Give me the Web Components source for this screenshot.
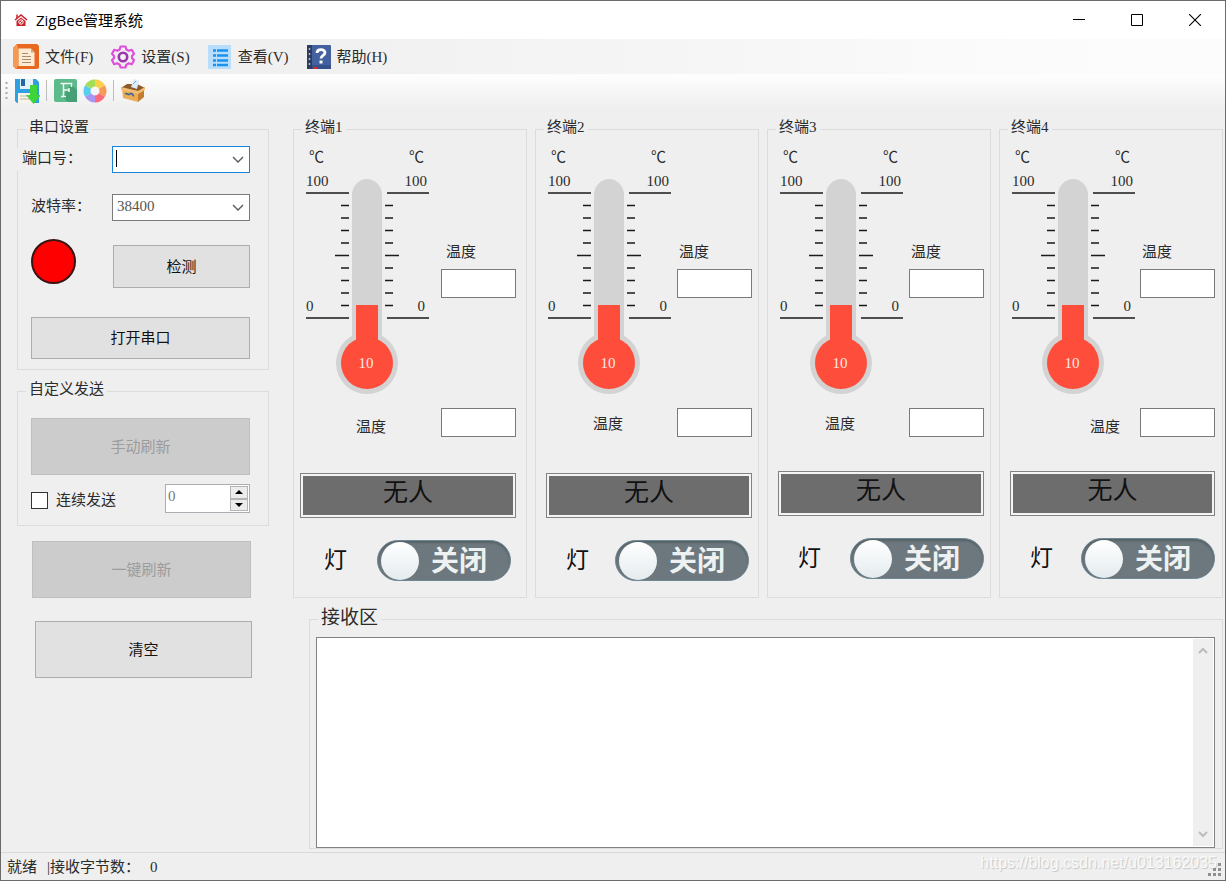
<!DOCTYPE html>
<html lang="zh-CN">
<head>
<meta charset="utf-8">
<title>ZigBee管理系统</title>
<style>
html, body { margin: 0; height: 100%; }
body {
  font-family: "Liberation Serif", "Noto Sans CJK SC", serif;
  font-size: 15px; line-height: 20px; color: #2b2b2b; background: #efefef;
}
</style>
</head>
<body>
<app-window></app-window>

<script>
function define(name, html, setup) {
  const tpl = document.createElement('template');
  tpl.innerHTML = html;
  customElements.define(name, class extends HTMLElement {
    constructor() {
      super();
      this.attachShadow({ mode: 'open' }).appendChild(tpl.content.cloneNode(true));
    }
    connectedCallback() { if (setup) setup(this, this.shadowRoot); }
  });
}

/* ---------- title bar ---------- */
define('title-bar', `
<style>
:host { display: flex; align-items: center; height: 38px; background: #fff; color: #000;
  font-family: "Open Sans", "Noto Sans CJK SC", sans-serif; padding: 0 1px 0 13px; }
h1 { font: inherit; margin: 0 auto 0 8px; }
button { width: 58px; height: 38px; border: 0; background: none; padding: 0; display: grid; place-items: center; }
svg { display: block; }
</style>
<svg width="14" height="14" viewBox="0 0 14 14" fill="none" stroke="#c8232c">
  <path d="M1 7 7 2l6 5" stroke-width="1.6"/><path d="M3 5V1.500" stroke-width="1.500"/>
  <path d="M2.500 8 7 4.500 11.500 8v5h-9z" fill="#c8232c" stroke="none"/>
  <circle cx="7" cy="9" r="2.200" stroke="#fff" stroke-width="1"/><path d="M6 10l3-3" stroke="#fff"/>
</svg>
<h1>ZigBee管理系统</h1>
<button aria-label="最小化"><svg width="12" height="12"><path d="M0 5.500h12" stroke="#000"/></svg></button>
<button aria-label="最大化"><svg width="12" height="12"><path d="M.5.5h11v11H.5z" fill="none" stroke="#000"/></svg></button>
<button aria-label="关闭窗口"><svg width="12" height="12"><path d="M0 0l12 12M12 0 0 12" stroke="#000" stroke-width="1.100"/></svg></button>
`);

/* ---------- menu ---------- */
define('menu-item', `
<style>
:host { display: block; }
button { display: flex; align-items: center; gap: 6px; border: 0; background: none; padding: 0; font: inherit; color: inherit; white-space: nowrap; }
</style>
<button><slot name="icon"></slot><slot></slot></button>
`);

define('menu-bar', `
<style>
:host { display: block; background: linear-gradient(90deg, #f0f0f0 25%, #fcfcfc 90%); }
nav { display: flex; align-items: center; gap: 18px; height: 35px; padding-left: 12px; }
svg { display: block; }
</style>
<nav>
  <menu-item><svg slot="icon" width="26" height="26" viewBox="0 0 26 26">
    <path d="M4 0h20l2 2v22l-2 1H3l-3-3V4z" fill="#e9681f"/><path d="M4 0 0 4v18l3 3 2-3V4z" fill="#f49a52"/>
    <path d="M5.500 4.500H18l3.500 4v13.500h-16z" fill="#fdebd2"/><path d="M18 4.500v4h3.500z" fill="#c9a98b"/>
    <path d="M9 9.500h6M9 12.500h9M9 15.500h9M9 18.500h9" stroke="#a98a74" stroke-width="1.200"/>
  </svg>文件(F)</menu-item>
  <menu-item><svg slot="icon" width="24" height="24" viewBox="0 0 24 24" fill="none" stroke="#c637c4">
    <path d="M9.500 1.500h5l.8 3 2.500 1.300 3-1 2.200 4-2 2.200v2l2 2.300-2.200 4-3-1-2.500 1.500-.8 2.700h-5l-.8-2.700-2.500-1.500-3 1-2.200-4 2-2.300v-2l-2-2.200 2.200-4 3 1 2.500-1.300z" stroke-width="2.200" stroke-linejoin="round" stroke="#e04fdb"/>
    <circle cx="12" cy="12" r="4.200" stroke="#9c36ad" stroke-width="2.600"/>
  </svg>设置(S)</menu-item>
  <menu-item><svg slot="icon" width="24" height="24" viewBox="0 0 24 24">
    <path d="M0 0h23v24H0z" fill="#b8defc"/>
    <path d="M5 5.500h3M5 10.500h3M5 15.500h3M5 20h3M9 5.500h11M9 10.500h11M9 15.500h11M9 20h11" stroke="#1a93ef" stroke-width="2.600"/>
  </svg>查看(V)</menu-item>
  <menu-item><svg slot="icon" width="24" height="24" viewBox="0 0 24 24">
    <rect width="24" height="24" rx="1" fill="#43609f"/><path d="M0 0h5v24H0z" fill="#2d3c5e"/>
    <path d="M5 20h19v4H5z" fill="#35508a"/>
    <path d="M2.500 3v2M2.500 8v2M2.500 13v2M2.500 18v2" stroke="#aeb9d2" stroke-width="1.500"/>
    <path d="M10 8c0-4.500 8-4.500 8-.4 0 3-4 2.700-4 6" fill="none" stroke="#fff" stroke-width="2.800"/>
    <path d="M12.500 15.500h3v3h-3z" fill="#fff"/><path d="M7 23h3" stroke="#d22b3a" stroke-width="2"/>
  </svg>帮助(H)</menu-item>
</nav>
`);

/* ---------- tool bar ---------- */
define('tool-bar', `
<style>
:host { display: flex; align-items: center; gap: 6px; height: 33px; padding: 0 0 2px 4px; background: linear-gradient(#fdfdfd 10%, #efefef 95%); }
button { border: 0; background: none; padding: 0; }
svg { display: block; }
i { width: 1px; height: 21px; background: #bdbdbd; }
i + button { margin-left: 1px; }
</style>
<svg width="3" height="20"><path d="M1.500 1v18" stroke="#a9a9a9" stroke-width="2" stroke-dasharray="2 3"/></svg>
<button aria-label="保存"><svg width="26" height="26" viewBox="0 0 26 26">
  <path d="M1 1h21l3 3v21H3l-2-2z" fill="#2f9fe0"/><path d="M6 1h13v10H6z" fill="#e4f1fa"/><path d="M7 1h4v7H7z" fill="#246a9e"/>
  <path d="M4 15h16v10H4z" fill="#f8f4e8"/><path d="M6 18h10M6 21h10" stroke="#b9b6a8"/>
  <path d="M16 7h7v10h4l-7.500 9L12 17h4z" fill="#3fd43a"/>
</svg></button>
<i></i>
<button aria-label="字体"><svg width="23" height="23" viewBox="0 0 23 23">
  <rect width="23" height="23" rx="2" fill="#5dba8b"/><path d="M9 18l5 5h9V11l-6-6z" fill="#46a075"/>
  <path d="M6.500 4.500h11v3.500M9.500 4.500v13M7 17.500h5M10 11h5M15 9v4" stroke="#effbf4" fill="none" stroke-width="1.500"/>
</svg></button>
<button aria-label="颜色"><svg width="24" height="24" viewBox="0 0 24 24" fill="none" stroke-width="7">
  <path d="M12 4a8 8 0 0 1 6.900 4" stroke="#fbd14b"/><path d="M18.900 8a8 8 0 0 1 0 8" stroke="#f79a55"/>
  <path d="M18.900 16A8 8 0 0 1 12 20" stroke="#fb6a7b"/><path d="M12 20a8 8 0 0 1-6.900-4" stroke="#a995f2"/>
  <path d="M5.100 16a8 8 0 0 1 0-8" stroke="#58cdee"/><path d="M5.100 8A8 8 0 0 1 12 4" stroke="#a5dd58"/>
</svg></button>
<i></i>
<button aria-label="打包"><svg width="24" height="24" viewBox="0 0 24 24">
  <path d="M0 9l6-4h10l8 4-7 4z" fill="#8d5a2b"/><path d="M1 9l16 3v11L2 19z" fill="#e9ad58"/>
  <path d="M17 12l6-3v9l-6 5z" fill="#c37d2f"/><path d="M0 8l17 4 7-4v3l-7 4L0 11z" fill="#f0bd72"/>
  <path d="M10 8l3-8 5 2-2 8z" fill="#dcecf7"/><path d="M12 5l3-3" stroke="#6cabdc"/>
  <path d="M4 15c2-2 3 2 5 0s3 2 4 2" fill="none" stroke="#37639a" stroke-width="1.600"/>
</svg></button>
`);

/* ---------- shared controls ---------- */
define('group-box', `
<style>
:host { display: block; }
fieldset { display: flex; flex-direction: column; box-sizing: border-box; height: 100%; min-width: 0; margin: 0; padding: 0; border: 1px solid #dcdcdc; }
legend { margin-left: 8px; padding: 0 3px 4px; }
:host([large]) legend { font-size: 19px; line-height: 24px; padding-bottom: 2px; }
.content { flex: 1; padding: var(--group-padding, 0); }
:host([large]) .content { display: grid; }
</style>
<fieldset><legend><slot name="legend"></slot></legend><div class="content"><slot></slot></div></fieldset>
`);

define('push-button', `
<style>
:host { display: block; }
button { display: block; box-sizing: border-box; width: 100%; height: 100%; padding: 0; font: inherit; color: #111; background: #e1e1e1; border: 1px solid #adadad; }
button:disabled { background: #ccc; border-color: #bfbfbf; color: #9c9c9c; }
</style>
<button><slot></slot></button>
`, (host, root) => { root.querySelector('button').disabled = host.hasAttribute('disabled'); });

define('number-spinner', `
<style>
:host { display: flex; box-sizing: border-box; width: 85px; height: 29px; border: 1px solid #abadb3; background: #fff; padding: 1px; }
input { flex: 1; min-width: 0; border: 0; padding: 0 0 6px 1px; font: inherit; color: #777; background: none; }
div { display: grid; width: 18px; }
button { border: 1px solid #b4b4b4; background: #ececec; padding: 0; display: grid; place-items: center; }
</style>
<input value="0" aria-label="发送间隔">
<div>
  <button aria-label="增加"><svg width="8" height="4"><path d="M0 4l4-4 4 4z"/></svg></button>
  <button aria-label="减少"><svg width="8" height="4"><path d="M0 0l4 4 4-4z"/></svg></button>
</div>
`);

/* ---------- left column ---------- */
define('serial-settings', `
<style>
:host { display: block; --group-padding: 5px 18px 10px 13px; }
.row { display: flex; justify-content: space-between; align-items: center; }
label { padding-bottom: 3px; }
.port label { margin-left: -14px; padding: 0 4px 3px 5px; background: #efefef; }
.box { position: relative; box-sizing: border-box; width: 138px; height: 27px; border: 1px solid #7a7a7a; background: #fff; }
.port .box { border-color: #1883d7; }
.box > svg { position: absolute; right: 5px; top: 9px; pointer-events: none; }
.caret { position: absolute; left: 3px; top: 3px; width: 1px; height: 17px; background: #000; }
input, select { appearance: none; box-sizing: border-box; width: 100%; height: 100%; border: 0; outline: 0; padding: 0 20px 3px 4px; font: inherit; color: #555; background: none; display: block; }
.baud { margin-top: 21px; }
.state { margin-top: 18px; height: 49px; align-items: flex-start; }
.lamp { box-sizing: border-box; width: 45px; height: 45px; border-radius: 50%; border: 2px solid #3a1414; background: #f00; }
.state push-button { width: 137px; height: 43px; align-self: flex-end; }
.open { height: 42px; margin-top: 29px; }
</style>
<group-box>
  <span slot="legend">串口设置</span>
  <div class="row port"><label for="port">端口号：</label>
    <div class="box"><input id="port"><span class="caret"></span>
    <svg width="12" height="8"><path d="M1 1l5 5 5-5" fill="none" stroke="#555" stroke-width="1.300"/></svg></div></div>
  <div class="row baud"><label for="baud">波特率：</label>
    <div class="box"><select id="baud"><option>38400</option></select>
    <svg width="12" height="8"><path d="M1 1l5 5 5-5" fill="none" stroke="#555" stroke-width="1.300"/></svg></div></div>
  <div class="row state"><span class="lamp"></span><push-button>检测</push-button></div>
  <push-button class="open">打开串口</push-button>
</group-box>
`);

define('custom-send', `
<style>
:host { display: block; --group-padding: 15px 18px 12px 13px; }
.refresh { height: 57px; }
.row { display: flex; align-items: center; justify-content: space-between; margin-top: 9px; }
label { display: flex; align-items: center; gap: 8px; padding-top: 3px; }
input { appearance: none; box-sizing: border-box; margin: 0; width: 17px; height: 17px; border: 1px solid #333; background: #fff; }
</style>
<group-box>
  <span slot="legend">自定义发送</span>
  <push-button class="refresh" disabled>手动刷新</push-button>
  <div class="row"><label><input type="checkbox">连续发送</label><number-spinner></number-spinner></div>
</group-box>
`);

define('side-panel', `
<style>
:host { display: block; width: 252px; flex: none; }
custom-send { margin-top: 9px; }
.wide { height: 57px; margin: 15px 18px 0 15px; }
.wide + .wide { margin: 23px 17px 0 18px; }
</style>
<serial-settings></serial-settings>
<custom-send></custom-send>
<push-button class="wide" disabled>一键刷新</push-button>
<push-button class="wide">清空</push-button>
`);

/* ---------- terminals ---------- */
define('thermo-meter', `
<style>
:host { display: block; }
svg { display: block; overflow: visible; font-size: 15px; fill: #2b2b2b; }
</style>
<svg width="124" height="250" viewBox="0 0 124 250" role="img" aria-label="温度计">
  <path d="M46 50a15 16 0 0 1 30 0V200H46z" fill="#d3d3d3"/>
  <circle cx="61" cy="218" r="31" fill="#d3d3d3"/>
  <circle cx="61" cy="218" r="26" fill="#ff4d3b"/>
  <path d="M50 160h22v45H50z" fill="#ff4d3b"/>
  <g class="ticks" stroke="#1a1a1a" stroke-width="1.400"></g>
  <text x="3" y="17">℃</text><text x="103" y="17">℃</text>
  <text x="0" y="41">100</text><text x="121" y="41" text-anchor="end">100</text>
  <text x="0" y="166">0</text><text x="119" y="166" text-anchor="end">0</text>
  <text x="60" y="223" text-anchor="middle" style="fill:#ffe9e6">10</text>
</svg>
`, (host, root) => {
  let d = '';
  for (let i = 0; i <= 10; i++) {
    const y = 48 + i * 12.5;
    if (i % 10 === 0) d += `M0 ${y}H43M81 ${y}H123`;
    else if (i === 5) d += `M29 ${y}H43M79 ${y}H93`;
    else d += `M35 ${y}H43M79 ${y}H87`;
  }
  root.querySelector('.ticks').innerHTML = `<path d="${d}"/>`;
});

define('lamp-switch', `
<style>
:host { display: block; }
button { display: flex; align-items: center; justify-content: space-between; box-sizing: border-box; width: 134px; height: 41px;
  padding: 0 23px 0 3px; border: 1px solid #6f8795; border-radius: 21px; background: #6c787d; box-shadow: inset 0 2px 2px #566267;
  color: #eef1f1; font: bold 28px/36px "Noto Sans CJK SC", sans-serif; }
span { padding-bottom: 4px; }
i { width: 38px; height: 38px; border-radius: 50%; background: linear-gradient(#fff, #e4ebee); }
</style>
<button role="switch" aria-checked="false"><i></i><span>关闭</span></button>
`);

define('terminal-panel', `
<style>
:host { display: block; --edge: 6px; --bar: 10px; --label: 57px; --lift: 3px; --switch: 3px; --rise: 36px; --side: 2px; }
:host([first]) { --edge: 10px; --bar: 6px; --label: 62px; --lift: 0px; --switch: 5px; --side: 5px; }
:host([raised]) { --rise: 34px; --switch: 0px; }
:host([last]) { --edge: 7px; --label: 90px; --lift: 0px; }
group-box { height: 100%; }
.body { padding: 4px var(--edge) 16px 0; }
.row { display: flex; justify-content: space-between; }
.top { padding-left: 12px; }
.side { display: flex; flex-direction: column; gap: 7px; padding-top: 97px; }
.side label { padding-left: var(--side); }
input { box-sizing: border-box; width: 75px; height: 29px; border: 1px solid #7a7a7a; background: #fff; padding: 0; }
.low { margin-top: 13px; padding-left: var(--label); align-items: flex-end; }
.low label { padding-bottom: var(--lift); }
.presence { box-sizing: border-box; height: 45px; margin: var(--rise) 0 0 var(--bar); border: 1px solid #828282; padding: 2px; background: #6d6d6d; box-shadow: inset 0 0 0 2px #f4f4f4;
  text-align: center; font-size: 25px; line-height: 34px; color: #111; }
.lamp { margin: 22px var(--switch) 0 30px; }
.lamp span { font-size: 23px; line-height: 41px; color: #111; }
</style>
<group-box>
  <span slot="legend" class="name"></span>
  <div class="body">
    <div class="row top"><thermo-meter></thermo-meter>
      <div class="side"><label for="t">温度</label><input id="t"></div></div>
    <div class="row low"><label for="h">温度</label><input id="h"></div>
    <div class="presence" role="status">无人</div>
    <div class="row lamp"><span>灯</span><lamp-switch></lamp-switch></div>
  </div>
</group-box>
`, (host, root) => { root.querySelector('.name').textContent = host.getAttribute('label'); });

/* ---------- receive area ---------- */
define('receive-area', `
<style>
:host { display: block; --group-padding: 5px 7px 0 6px; }
group-box { height: 100%; }
.frame { display: flex; box-sizing: border-box; border: 1px solid #828282; background: #fff; }
textarea { flex: 1; min-width: 0; border: 0; padding: 2px; resize: none; outline: 0; font: inherit; background: none; }
.scroll { display: flex; flex-direction: column; justify-content: space-between; align-items: center; width: 20px; padding: 8px 0; margin: 1px; background: #efefef; }
</style>
<group-box large>
  <span slot="legend">接收区</span>
  <div class="frame"><textarea aria-label="接收区"></textarea>
    <div class="scroll">
      <svg width="10" height="8" fill="none" stroke="#bcbcbc" stroke-width="2"><path d="M1 6l4-4 4 4"/></svg>
      <svg width="10" height="8" fill="none" stroke="#bcbcbc" stroke-width="2"><path d="M1 2l4 4 4-4"/></svg>
    </div></div>
</group-box>
`);

/* ---------- status bar ---------- */
define('status-bar', `
<style>
:host { display: flex; align-items: center; box-sizing: border-box; height: 28px; padding: 0 3px 0 6px; border-top: 1px solid #d9d9d9; }
.count { margin-left: 10px; }
.num { margin-left: 10px; }
.mark { margin: 0 -9px 8px auto; font: 16px/18px "Liberation Sans", sans-serif; color: #fafafa; text-shadow: 1px 1px 1px #c4c4c4; }
svg { align-self: flex-end; margin-bottom: 3px; }
</style>
<span>就绪</span><span class="count">|接收字节数：</span><span class="num">0</span>
<span class="mark">https://blog.csdn.net/u013162035</span>
<svg width="14" height="14" fill="#8f8f8f"><path d="M10 0h3v3h-3zM5 5h3v3H5zM10 5h3v3h-3zM0 10h3v3H0zM5 10h3v3H5zM10 10h3v3h-3z"/></svg>
`);

/* ---------- window ---------- */
define('app-window', `
<style>
:host { display: flex; flex-direction: column; box-sizing: border-box; min-height: 100vh; border: 1px solid #6b6b6b; background: #efefef; }
main { flex: 1; display: flex; gap: 24px; padding: 8px 2px 3px 16px; }
section { flex: 1; min-width: 0; display: flex; flex-direction: column; gap: 8px; }
.terminals { display: grid; grid-template-columns: 234fr 224fr 224fr 224fr; gap: 8px; }
receive-area { flex: 1; margin-left: 16px; display: grid; }
</style>
<title-bar></title-bar>
<menu-bar></menu-bar>
<tool-bar></tool-bar>
<main>
  <side-panel></side-panel>
  <section>
    <div class="terminals">
      <terminal-panel label="终端1" first></terminal-panel>
      <terminal-panel label="终端2"></terminal-panel>
      <terminal-panel label="终端3" raised></terminal-panel>
      <terminal-panel label="终端4" raised last></terminal-panel>
    </div>
    <receive-area></receive-area>
  </section>
</main>
<status-bar></status-bar>
`);
</script>
</body>
</html>
